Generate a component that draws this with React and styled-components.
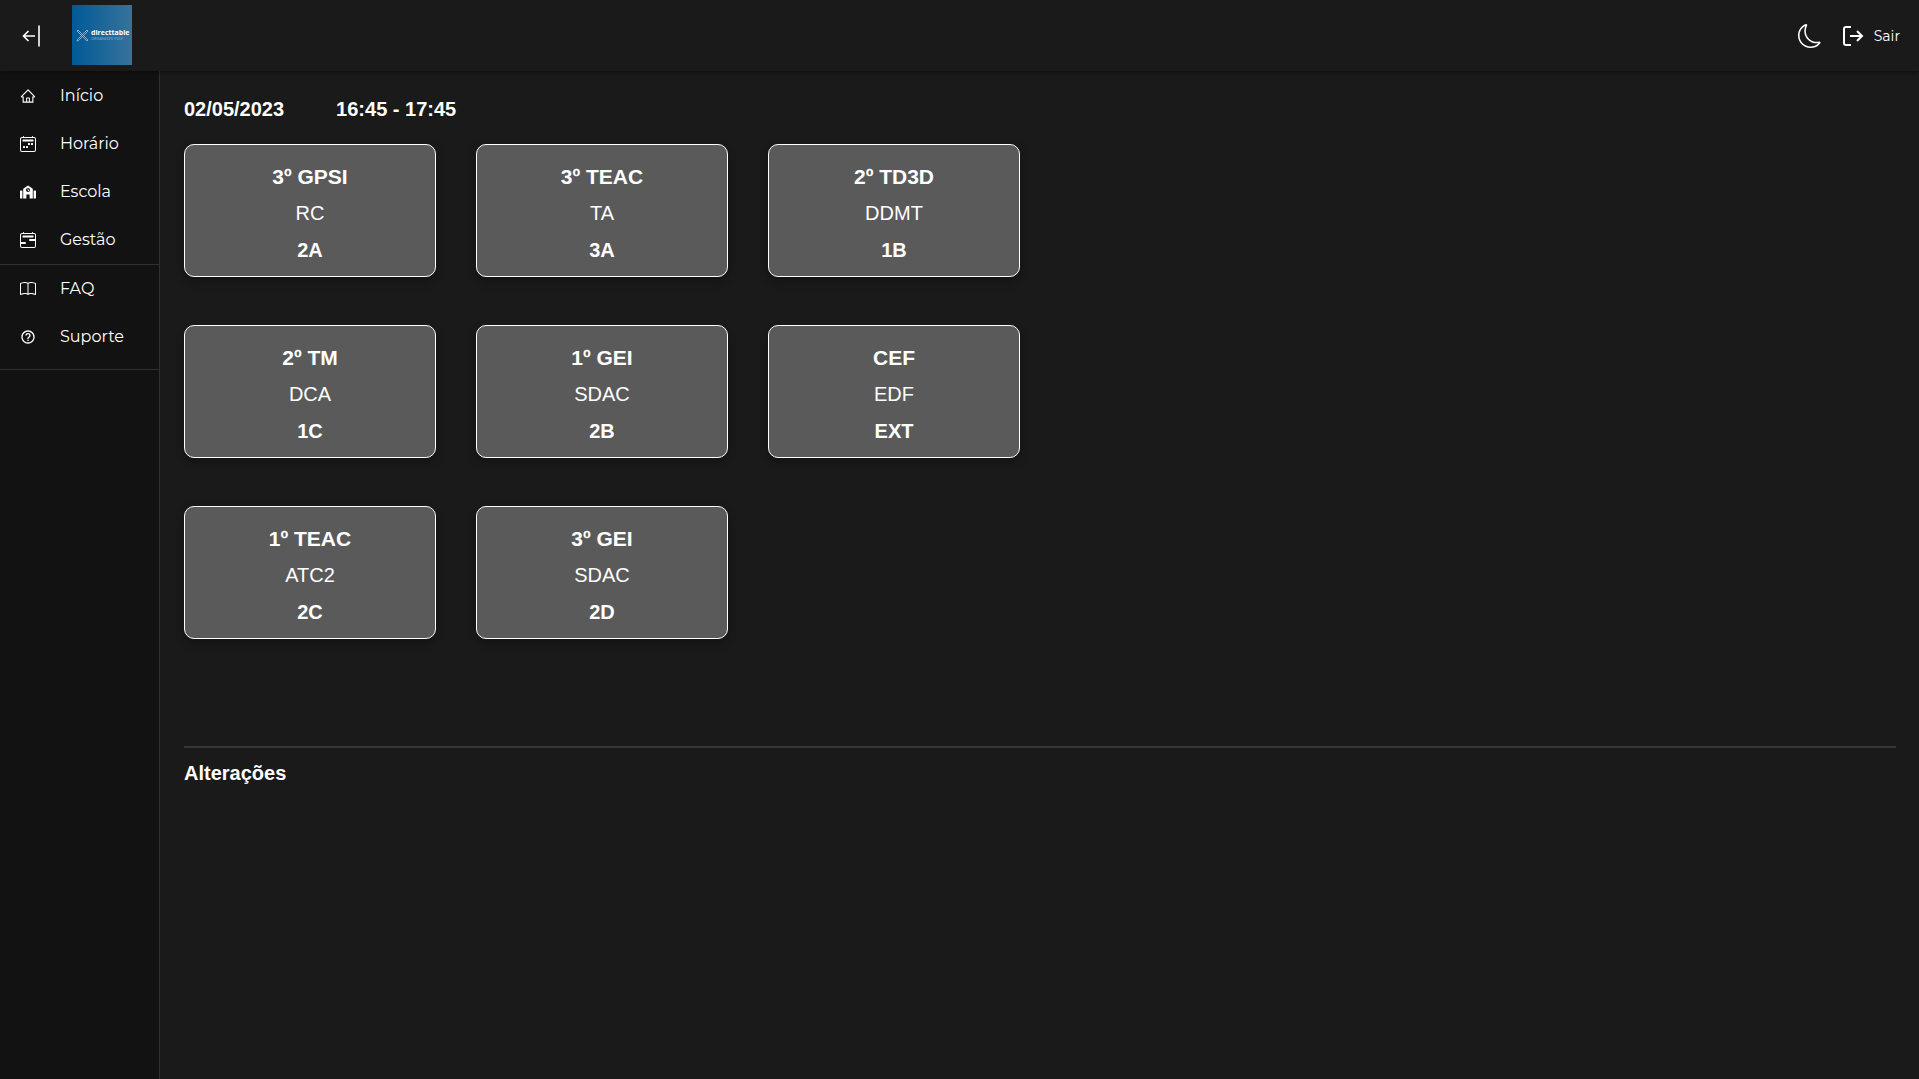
import React from "react";
import styled, { createGlobalStyle } from "styled-components";
import { BsMoon, BsCalendar2Week, BsCalendar2Range, BsBook } from "react-icons/bs";
import { AiOutlineHome } from "react-icons/ai";
import { BiHelpCircle } from "react-icons/bi";
import { FaSchool } from "react-icons/fa";

const GlobalStyle = createGlobalStyle`
  * { box-sizing: border-box; }
  body {
    margin: 0;
    background: #1a1a1a;
    color: #fff;
    font-family: "Liberation Sans", Arial, sans-serif;
  }
  h1, h2, p, ul { margin: 0; padding: 0; }
  button { border: 0; padding: 0; background: none; color: inherit; cursor: pointer; }
`;

const Page = styled.div`
  display: flex;
  flex-direction: column;
  min-height: 100vh;
`;

const Header = styled.header`
  position: relative;
  display: flex;
  align-items: center;
  padding: 5px 19px 6px 19px;
  background: #1a1a1a;
  box-shadow: 0 1px 6px rgba(0, 0, 0, 0.5);
`;

const IconButton = styled.button`
  display: flex;
  align-items: center;
  justify-content: center;
  padding-top: 2px;
`;

const Logo = styled.a`
  display: flex;
  align-items: center;
  gap: 2px;
  width: 60px;
  height: 60px;
  margin-left: 31px;
  padding-left: 4px;
  background: linear-gradient(90deg, #005a96, #37729c);
  color: #fff;
  text-decoration: none;
`;

const LogoText = styled.span`
  display: flex;
  flex-direction: column;
  font-family: "Open Sans", sans-serif;
  font-size: 7px;
  font-weight: 700;
  line-height: 7px;
`;

const LogoTagline = styled.span`
  color: #8fb4cf;
  font-family: "Open Sans", sans-serif;
  font-size: 4px;
  font-weight: 400;
  line-height: 6px;
  white-space: nowrap;
`;

const Actions = styled.div`
  display: flex;
  align-items: center;
  gap: 20px;
  margin-left: auto;
`;

const LogoutButton = styled(IconButton)`
  gap: 10px;
  font-family: Montserrat, "Noto Sans", sans-serif;
  font-size: 14px;
`;

const Body = styled.div`
  display: flex;
  flex: 1;
`;

const Sidebar = styled.nav`
  width: 160px;
  padding-top: 1px;
  background: #121212;
  border-right: 1px solid #303030;
`;

const NavGroup = styled.ul`
  list-style: none;
  padding-bottom: ${(p) => (p.$last ? "8px" : "0")};
  border-bottom: 1px solid #303030;
`;

const NavLink = styled.a`
  display: flex;
  align-items: center;
  gap: 24px;
  height: 48px;
  padding-left: 20px;
  color: #fff;
  font-family: Montserrat, Inter, sans-serif;
  font-size: 16px;
  text-decoration: none;
`;

const NavLabel = styled.span`
  padding-bottom: 2px;
`;

const Main = styled.main`
  flex: 1;
  padding: 24px 23px 24px 24px;
`;

const Heading = styled.div`
  display: flex;
  gap: 52px;
  margin-bottom: 21px;
`;

const Title = styled.h2`
  font-size: 20px;
  font-weight: 700;
  line-height: 28px;
`;

const Cards = styled.section`
  display: grid;
  grid-template-columns: repeat(3, 252px);
  gap: 48px 40px;
  min-height: 602px;
  align-content: start;
`;

const Card = styled.article`
  padding: 13px 0 7px;
  border: 1px solid #fff;
  border-radius: 10px;
  background: #5a5a5a;
  box-shadow: 0 4px 8px rgba(0, 0, 0, 0.3);
  font-size: 20px;
  line-height: 37px;
  text-align: center;
`;

const ClassName = styled.h2`
  font-size: 21px;
  font-weight: 700;
  line-height: 37px;
`;

const Room = styled.p`
  font-weight: 700;
`;

const Changes = styled.section`
  padding-top: 11px;
  border-top: 2px solid #363636;
`;

const CollapseIcon = () => (
  <svg width="22" height="24" viewBox="0 0 22 24" fill="none" stroke="#fff" aria-hidden="true">
    <path d="M16 12H4.5M9.5 7L4.5 12L9.5 17" strokeWidth="1.6" />
    <path d="M20 1.5V22.5" strokeWidth="1.6" />
  </svg>
);

const LogoutIcon = () => (
  <svg width="22" height="22" viewBox="0 0 22 22" fill="none" stroke="#fff" strokeWidth="2" aria-hidden="true">
    <path d="M9 2H4Q2 2 2 4V18Q2 20 4 20H9" />
    <path d="M8 11H20M15 6L20 11L15 16" />
  </svg>
);

const LogoMark = () => (
  <svg width="13" height="13" viewBox="0 0 13 13" fill="none" stroke="#9cc0da" strokeWidth="0.8" aria-hidden="true">
    <path d="M2 1L12 11L11 12L1 2ZM11 1L12 2L2.5 11.5L1 12L1.5 10.5Z" />
  </svg>
);

const groups = [
  [
    ["Início", AiOutlineHome],
    ["Horário", BsCalendar2Week],
    ["Escola", FaSchool],
    ["Gestão", BsCalendar2Range],
  ],
  [
    ["FAQ", BsBook],
    ["Suporte", BiHelpCircle],
  ],
];

const lessons = [
  ["3º GPSI", "RC", "2A"],
  ["3º TEAC", "TA", "3A"],
  ["2º TD3D", "DDMT", "1B"],
  ["2º TM", "DCA", "1C"],
  ["1º GEI", "SDAC", "2B"],
  ["CEF", "EDF", "EXT"],
  ["1º TEAC", "ATC2", "2C"],
  ["3º GEI", "SDAC", "2D"],
];

export default function App() {
  return (
    <Page>
      <GlobalStyle />
      <Header>
        <IconButton type="button" aria-label="Recolher menu">
          <CollapseIcon />
        </IconButton>
        <Logo href="#">
          <LogoMark />
          <LogoText>
            directtable
            <LogoTagline>ORGANIZES YOU!</LogoTagline>
          </LogoText>
        </Logo>
        <Actions>
          <IconButton type="button" aria-label="Modo escuro">
            <BsMoon size={24} />
          </IconButton>
          <LogoutButton type="button">
            <LogoutIcon />
            Sair
          </LogoutButton>
        </Actions>
      </Header>
      <Body>
        <Sidebar>
          {groups.map((items, i) => (
            <NavGroup key={i} $last={i === groups.length - 1}>
              {items.map(([label, Icon]) => (
                <li key={label}>
                  <NavLink href="#">
                    <Icon size={16} />
                    <NavLabel>{label}</NavLabel>
                  </NavLink>
                </li>
              ))}
            </NavGroup>
          ))}
        </Sidebar>
        <Main>
          <Heading>
            <Title>02/05/2023</Title>
            <Title>16:45 - 17:45</Title>
          </Heading>
          <Cards>
            {lessons.map(([name, subject, room]) => (
              <Card key={name}>
                <ClassName>{name}</ClassName>
                <p>{subject}</p>
                <Room>{room}</Room>
              </Card>
            ))}
          </Cards>
          <Changes>
            <Title>Alterações</Title>
          </Changes>
        </Main>
      </Body>
    </Page>
  );
}
